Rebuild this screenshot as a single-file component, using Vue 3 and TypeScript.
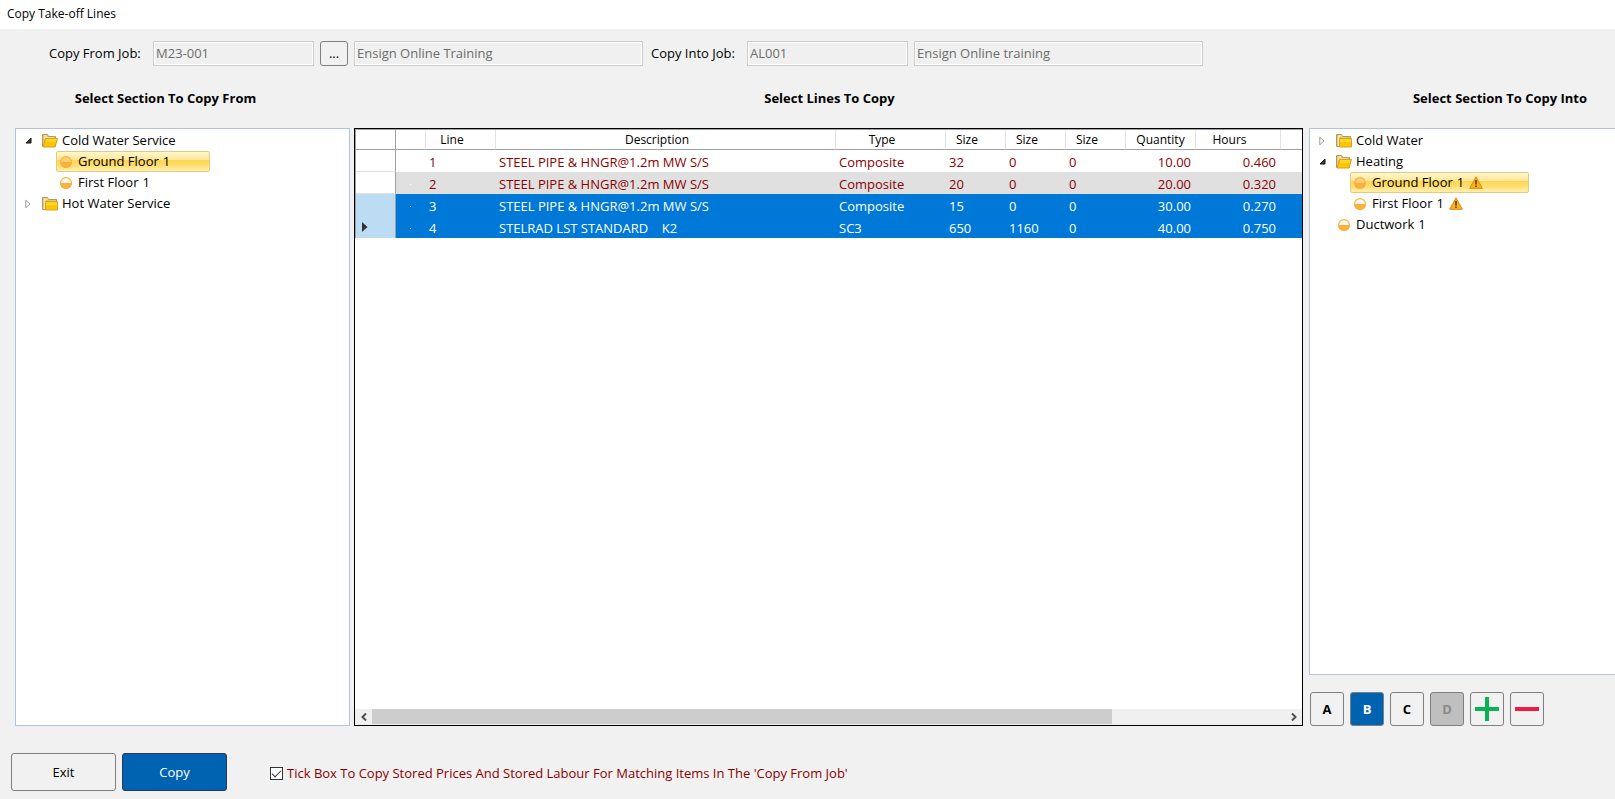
<script setup lang="ts">
import { ref } from 'vue'

interface TreeNode {
  label: string
  count?: number
  kind: 'open' | 'closed' | 'item'
  level: number
  selected?: boolean
  warning?: boolean
}

interface TakeoffLine {
  line: number
  description: string
  type: string
  sizes: number[]
  quantity: string
  hours: string
  selected: boolean
}

const sourceTree: TreeNode[] = [
  { label: 'Cold Water Service', kind: 'open', level: 0 },
  { label: 'Ground Floor', count: 1, kind: 'item', level: 1, selected: true },
  { label: 'First Floor', count: 1, kind: 'item', level: 1 },
  { label: 'Hot Water Service', kind: 'closed', level: 0 },
]

const targetTree: TreeNode[] = [
  { label: 'Cold Water', kind: 'closed', level: 0 },
  { label: 'Heating', kind: 'open', level: 0 },
  { label: 'Ground Floor', count: 1, kind: 'item', level: 1, selected: true, warning: true },
  { label: 'First Floor', count: 1, kind: 'item', level: 1, warning: true },
  { label: 'Ductwork', count: 1, kind: 'item', level: 0 },
]

const panels = [
  { side: 'source', nodes: sourceTree, label: 'Section to copy from' },
  { side: 'target', nodes: targetTree, label: 'Section to copy into' },
]

const lines: TakeoffLine[] = [
  { line: 1, description: 'STEEL PIPE & HNGR@1.2m MW S/S', type: 'Composite', sizes: [32, 0, 0], quantity: '10.00', hours: '0.460', selected: false },
  { line: 2, description: 'STEEL PIPE & HNGR@1.2m MW S/S', type: 'Composite', sizes: [20, 0, 0], quantity: '20.00', hours: '0.320', selected: false },
  { line: 3, description: 'STEEL PIPE & HNGR@1.2m MW S/S', type: 'Composite', sizes: [15, 0, 0], quantity: '30.00', hours: '0.270', selected: true },
  { line: 4, description: 'STELRAD LST STANDARD    K2', type: 'SC3', sizes: [650, 1160, 0], quantity: '40.00', hours: '0.750', selected: true },
]
const currentLine = 4

const fromJob = ref('M23-001')
const fromName = ref('Ensign Online Training')
const intoJob = ref('AL001')
const intoName = ref('Ensign Online training')
const copyStored = ref(true)
const activeOption = ref('B')
const options = ['A', 'B', 'C', 'D']
</script>

<template>
  <div class="window">
    <header class="titlebar">Copy Take-off Lines</header>

    <div class="jobs">
      <label class="from-label" for="from-job">Copy From Job:</label>
      <input id="from-job" v-model="fromJob" class="code" disabled />
      <button class="browse" type="button" aria-label="Browse jobs">...</button>
      <input v-model="fromName" class="name" aria-label="Copy from job name" disabled />
      <label class="into-label" for="into-job">Copy Into Job:</label>
      <input id="into-job" v-model="intoJob" class="code" disabled />
      <input v-model="intoName" class="name" aria-label="Copy into job name" disabled />
    </div>

    <main class="columns">
      <h2 class="head-source">Select Section To Copy From</h2>
      <h2>Select Lines To Copy</h2>
      <h2 class="head-target">Select Section To Copy Into</h2>

      <section v-for="panel in panels" :key="panel.side" :class="['side', panel.side]">
        <ul class="tree" role="tree" :aria-label="panel.label">
          <li
            v-for="node in panel.nodes"
            :key="node.label"
            role="treeitem"
            :class="['node', 'level-' + node.level]"
          >
            <span class="expander">
              <svg v-if="node.kind === 'open'" width="7" height="7" viewBox="0 0 7 7">
                <path d="M6 1v5H1z" fill="#404040" stroke="#111" />
              </svg>
              <svg v-if="node.kind === 'closed'" width="6" height="10" viewBox="0 0 6 10">
                <path d="M.8 1.2v7.6L5 5z" fill="#fff" stroke="#999" />
              </svg>
            </span>
            <span :class="['entry', { selected: node.selected, wide: node.warning }]">
              <svg v-if="node.kind === 'item'" class="dot" width="14" height="14" viewBox="0 0 14 14">
                <circle cx="7" cy="7" r="5.4" :fill="node.selected ? '#ffcf7a' : '#fffaf0'" stroke="#fbb03b" stroke-width="1.2" />
                <path d="M1 7h12a6 6 0 0 1-12 0z" fill="#fbb03b" />
              </svg>
              <svg v-else-if="node.kind === 'open'" width="16" height="14" viewBox="0 0 16 14">
                <path d="M.5 12.5V.5h5l1 2h7v10z" fill="#e3c77c" stroke="#b9975a" />
                <path d="M2 2h3M2 4h10" stroke="#fff3c4" />
                <path d="M1 13 3.5 4.5h12L13 13z" fill="#ffc400" stroke="#d9a21b" />
                <path d="M4.2 5.7h10M3.8 7.2h10" stroke="#ffe23d" />
              </svg>
              <svg v-else width="16" height="14" viewBox="0 0 16 14">
                <path d="M.5 12.5V.5h5l1 2h8v10z" fill="#e3c77c" stroke="#b9975a" />
                <path d="M2.5 12V2h3" fill="none" stroke="#fff3c4" />
                <path d="M3.5 4.5h12v8.5h-12z" fill="#ffc400" stroke="#d9a21b" />
                <path d="M4 6h11M4 7.5h11" stroke="#ffe23d" />
              </svg>
              <span>{{ node.label }}</span>
              <span v-if="node.count">{{ node.count }}</span>
              <svg v-if="node.warning" class="warn" width="14" height="13" viewBox="0 0 14 13">
                <path d="M7 .8 13.3 12.3H.7z" fill="#fbb117" stroke="#d98a10" stroke-linejoin="round" />
                <path d="M7 4v4.4M7 9.6v1.5" stroke="#4a3510" stroke-width="1.5" />
              </svg>
            </span>
          </li>
        </ul>
        <div v-if="panel.side === 'target'" class="options">
          <button
            v-for="option in options"
            :key="option"
            type="button"
            :class="{ active: option === activeOption }"
            :disabled="option === 'D'"
            @click="activeOption = option"
          >{{ option }}</button>
          <button type="button" aria-label="Add">
            <svg width="24" height="24" viewBox="0 0 24 24">
              <path d="M12 0v24M0 12h24" stroke="#0bb254" stroke-width="4" />
            </svg>
          </button>
          <button type="button" aria-label="Remove">
            <svg width="24" height="24" viewBox="0 0 24 24">
              <path d="M0 12h24" stroke="#ed1c45" stroke-width="4" />
            </svg>
          </button>
        </div>
      </section>

      <section class="lines">
        <table>
          <colgroup>
            <col class="w-marker" /><col class="w-flag" /><col class="w-line" /><col class="w-desc" />
            <col class="w-type" /><col class="w-size" /><col class="w-size" /><col class="w-size" />
            <col class="w-qty" /><col class="w-hours" /><col />
          </colgroup>
          <thead>
            <tr>
              <th class="marker"></th>
              <th></th>
              <th>Line</th>
              <th>Description</th>
              <th>Type</th>
              <th>Size</th>
              <th>Size</th>
              <th>Size</th>
              <th>Quantity</th>
              <th>Hours</th>
              <th></th>
            </tr>
          </thead>
          <tbody>
            <tr v-for="row in lines" :key="row.line" :class="{ picked: row.selected }">
              <td class="marker">
                <svg v-if="row.line === currentLine" width="6" height="10" viewBox="0 0 6 10">
                  <path d="M0 0v10l5.5-5z" fill="#333" />
                </svg>
              </td>
              <td class="flag"><i v-if="row.line > 1"></i></td>
              <td>{{ row.line }}</td>
              <td>{{ row.description }}</td>
              <td>{{ row.type }}</td>
              <td v-for="(size, i) in row.sizes" :key="i">{{ size }}</td>
              <td class="num">{{ row.quantity }}</td>
              <td class="num">{{ row.hours }}</td>
              <td></td>
            </tr>
          </tbody>
        </table>
        <div class="scrollbar">
          <button type="button" aria-label="Scroll left">
            <svg width="6" height="8" viewBox="0 0 6 8"><path d="M5 .5 1.5 4 5 7.5" fill="none" stroke="#505050" stroke-width="2" /></svg>
          </button>
          <div class="track"><div class="thumb"></div></div>
          <button type="button" aria-label="Scroll right">
            <svg width="6" height="8" viewBox="0 0 6 8"><path d="M1 .5 4.5 4 1 7.5" fill="none" stroke="#505050" stroke-width="2" /></svg>
          </button>
        </div>
      </section>
    </main>

    <footer class="actions">
      <button type="button">Exit</button>
      <button type="button" class="primary">Copy</button>
      <label class="tick">
        <input v-model="copyStored" type="checkbox" />
        <span>Tick Box To Copy Stored Prices And Stored Labour For Matching Items In The 'Copy From Job'</span>
      </label>
    </footer>
  </div>
</template>

<style>
body {
  margin: 0;
  background: #f1f1f1;
}
</style>

<style scoped>
.window {
  box-sizing: border-box;
  display: flex;
  flex-direction: column;
  min-height: 100vh;
  overflow: hidden;
  background: #f1f1f1;
  color: #000;
  font: 13px/21px "Open Sans", "Noto Sans", sans-serif;
}
.window * {
  box-sizing: border-box;
}
button,
input {
  margin: 0;
  font: inherit;
}
button {
  display: flex;
  align-items: center;
  justify-content: center;
  padding: 0;
  border: 1px solid #7f7f7f;
  border-radius: 3px;
  background: #f1f1f1;
  color: #000;
}

.titlebar {
  height: 29px;
  padding-left: 7px;
  background: #fff;
  font-size: 12px;
  line-height: 28px;
}

.jobs {
  display: flex;
  align-items: center;
  gap: 6px;
  padding: 12px 0 0 49px;
}
.from-label {
  width: 98px;
}
.into-label {
  width: 92px;
  padding-left: 2px;
  white-space: nowrap;
}
.jobs input {
  height: 25px;
  padding: 0 2px 2px;
  border: 1px solid #ccc;
  border-radius: 0;
  background: #f0f0f0;
  box-shadow: inset 0 0 0 1px #fff;
  color: #6d6d6d;
}
.code {
  width: 161px;
}
.name {
  width: 289px;
}
.browse {
  width: 28px;
  height: 25px;
}

.columns {
  flex: 1;
  display: grid;
  grid-template: 62px 1fr / 335px minmax(0, 1fr) 306px;
  padding-left: 15px;
}
h2 {
  margin: 0;
  font-size: 13px;
  line-height: 64px;
  text-align: center;
}
.head-source {
  padding-right: 34px;
}
.head-target {
  padding-left: 76px;
}
.side {
  display: flex;
  flex-direction: column;
  grid-row: 2;
}
.source {
  grid-column: 1;
}
.target {
  grid-column: 3;
}
.lines {
  grid-row: 2;
  grid-column: 2;
  margin: 0 6px 0 4px;
}

.tree {
  flex: 1;
  margin: 0;
  padding: 1px 0 0 6px;
  border: 1px solid #b0c4de;
  background: #fff;
  list-style: none;
}
.target .tree {
  border-right: 0;
}
.node {
  display: flex;
  align-items: center;
  height: 21px;
}
.expander {
  display: flex;
  justify-content: center;
  width: 12px;
}
.level-0 .expander {
  margin-right: 8px;
}
.level-1 .expander {
  margin-right: 22px;
}
.entry {
  display: flex;
  align-items: center;
  gap: 4px;
  height: 21px;
}
.level-1 .entry {
  padding-left: 2px;
  border: 1px solid transparent;
}
.level-1 .entry.selected {
  width: 154px;
  border-color: #e0cb84;
  border-radius: 2px;
  background: linear-gradient(#fff7d0, #ffe798 40%, #ffd54a 42%, #ffe07a 75%, #fff0b0);
}
.level-1 .entry.selected.wide {
  width: 179px;
}
.level-0 .dot {
  margin: 0 1px;
}
.level-1 .dot {
  margin-right: 1px;
}
.warn {
  margin-left: 1px;
}

.options {
  display: flex;
  gap: 6px;
  padding: 17px 0 0 1px;
}
.options button {
  width: 34px;
  height: 34px;
  font-weight: 700;
}
.options .active {
  background: #0063b1;
  color: #fff;
}
.options button:disabled {
  background: #bfbfbf;
  color: #8a8a8a;
}

.lines {
  display: flex;
  flex-direction: column;
  justify-content: space-between;
  border: 1px solid #000;
  background: #fff;
}
table {
  width: 100%;
  table-layout: fixed;
  border-collapse: separate;
  border-spacing: 0;
  border-top: 1px solid #a0a0a0;
  border-left: 1px solid #a0a0a0;
}
.w-marker { width: 40px; }
.w-flag { width: 30px; }
.w-line { width: 70px; }
.w-desc { width: 340px; }
.w-type { width: 110px; }
.w-size { width: 60px; }
.w-qty { width: 70px; }
.w-hours { width: 85px; }
th {
  height: 20px;
  padding: 0 17px 0 0;
  border-right: 1px solid #e2e2e2;
  border-bottom: 1px solid #a0a0a0;
  font-size: 12px;
  font-weight: 400;
  line-height: 19px;
}
th:nth-child(9) {
  padding-right: 0;
}
th:last-child {
  border-right: 0;
}
td {
  height: 22px;
  padding: 2px 5px 0 3px;
  color: #8b0000;
  line-height: 20px;
  white-space: pre;
}
tbody tr:nth-child(even) td {
  background: #e0e0e0;
}
tbody tr.picked td {
  background: #0078d7;
  color: #fff;
}
.num {
  text-align: right;
}
th.marker,
td.marker {
  border-right: 1px solid #a0a0a0;
}
tbody tr td.marker {
  border-bottom: 1px solid #e2e2e2;
  background: #fff;
}
tbody tr.picked td.marker {
  padding-top: 0;
  border-bottom: 0;
  background: #bcdcf4;
}
.marker svg {
  display: block;
  margin-left: 3px;
}
.flag i {
  display: block;
  width: 1px;
  height: 1px;
  margin-left: 11px;
  background: #fff;
}
.scrollbar {
  display: flex;
  height: 16px;
  background: #f0f0f0;
}
.scrollbar button {
  width: 17px;
  border: 0;
  border-radius: 0;
  background: #f0f0f0;
}
.track {
  flex: 1;
}
.thumb {
  width: 81%;
  height: 15px;
  background: #cdcdcd;
}

.actions {
  display: flex;
  align-items: center;
  gap: 6px;
  padding: 27px 0 8px 11px;
}
.actions button {
  width: 105px;
  height: 38px;
}
.actions .primary {
  border-color: #263a50;
  background: #0063b1;
  color: #fff;
}
.tick {
  display: flex;
  align-items: center;
  gap: 4px;
  margin-left: 37px;
  padding-top: 2px;
  color: #8b0000;
}
.tick input {
  appearance: none;
  width: 13px;
  height: 13px;
  border: 1px solid #333;
  background: #fff;
}
.tick input:checked::before {
  content: "";
  display: block;
  width: 8px;
  height: 4px;
  margin: 2px 0 0 1px;
  border: solid #333;
  border-width: 0 0 1px 1px;
  transform: rotate(-45deg);
}
</style>
